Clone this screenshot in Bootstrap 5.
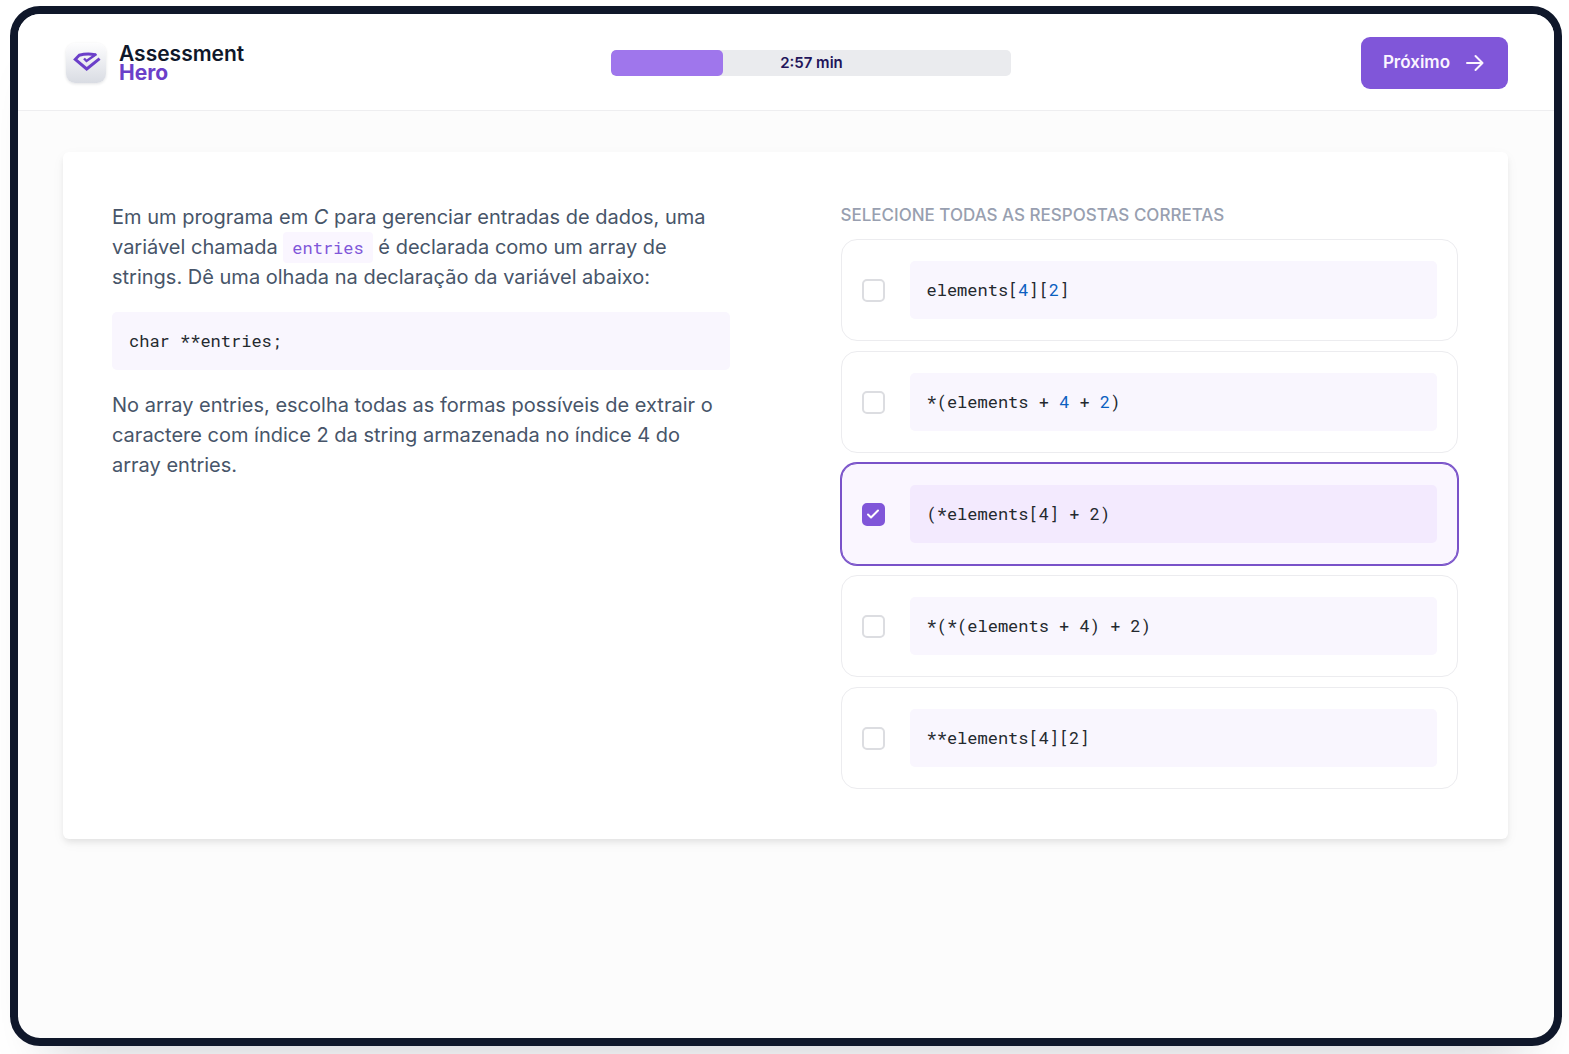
<!DOCTYPE html>
<html lang="pt-BR">
<head>
<meta charset="utf-8">
<meta name="viewport" content="width=device-width, initial-scale=1">
<title>Assessment Hero</title>
<link href="https://cdn.jsdelivr.net/npm/bootstrap@5.3.0/dist/css/bootstrap.min.css" rel="stylesheet">
<style>
  body { font-family: Inter, "Liberation Sans", sans-serif; color: #475569; background: #fff; }
  .page-wrap { min-height: 100vh; padding: 6px 7px 8px 10px; }
  .device { border: 8px solid #0f172a; border-radius: 30px; background: #fcfcfc; box-shadow: 0 40px 50px -40px rgba(15, 23, 42, .25); }
  .topbar { min-height: 97px; padding: 2px 46px 0 48px; background: #fff; border-bottom: 1px solid #eeeef0; border-radius: 22px 22px 0 0; }
  .brand { gap: 13px; width: 196px; color: #0f172a; font-size: 21px; font-weight: 600; line-height: 19px; }
  .brand-hero { color: #6b3fc9; font-weight: 700; }
  .brand-icon { width: 40px; height: 40px; border-radius: 9px; background: linear-gradient(#fdfdfe, #d9dce3); box-shadow: 0 1px 3px rgba(15, 23, 42, .12); }
  .brand-icon svg { display: block; }
  .timer { width: 400px; height: 26px; border-radius: 5px; background: #eaebee; color: #22155a; font-size: 15px; font-weight: 600; }
  .timer .progress-bar { border-radius: 5px; background: #9f76ec; }
  .next-btn { height: 52px; padding: 0 22px; gap: 14px; border: 0; border-radius: 9px; background: #8056d9; color: #fbf5ff; font-size: 17px; font-weight: 600; }
  .next-btn:hover { background: #6f46c6; color: #fff; }
  .main-area { padding: 41px 46px 41px 45px; }
  .question { padding: 50px 50px 50px 49px; column-gap: 111px; border: 0; border-radius: 6px; background: #fff; box-shadow: 0 4px 6px -1px rgba(0, 0, 0, .08), 0 4px 14px rgba(0, 0, 0, .04); }
  .prompt { font-size: 20px; line-height: 30px; }
  .prompt p { margin-bottom: 20px; }
  .code-inline { padding: 4px 9px; border-radius: 4px; background: #faf6ff; color: #8056d9; font-family: "Roboto Mono", "DejaVu Sans Mono", monospace; font-size: 17px; line-height: 20px; }
  .code-box { height: 58px; padding: 0 17px; border-radius: 5px; background: #f9f6fe; color: #24292e; font-family: "Roboto Mono", "DejaVu Sans Mono", monospace; font-size: 17px; line-height: 58px; }
  .prompt .code-box { margin-bottom: 20px; }
  .num { color: #0b5fc0; }
  .hint { margin-bottom: 11px; color: #989fb0; font-size: 17px; font-weight: 500; line-height: 26px; }
  .options { gap: 10px; }
  .option { padding: 21px 20px; gap: 25px; border: 1px solid #ececef; border-radius: 16px; background: #fff; cursor: pointer; }
  .option .form-check-input { width: 23px; height: 23px; border: 2px solid #dcdde1; border-radius: 5px; }
  .option .form-check-input:checked { border-color: #8056d9; background-color: #8056d9; background-size: 18px;
    background-image: url("data:image/svg+xml,%3csvg xmlns='http://www.w3.org/2000/svg' viewBox='0 0 18 18'%3e%3cpath d='M4 9.5l3 3 7-7' fill='none' stroke='%23fff' stroke-width='2' stroke-linecap='round' stroke-linejoin='round'/%3e%3c/svg%3e"); }
  .option:has(:checked) { border-color: #7952c9; background: #faf6ff; box-shadow: 0 0 0 1px #7952c9; }
  .option:has(:checked) .code-box { background: #f3eafe; }
</style>
<script src="https://cdn.jsdelivr.net/npm/bootstrap@5.3.0/dist/js/bootstrap.bundle.min.js"></script>
</head>
<body>
<div class="page-wrap d-flex">
  <div class="device flex-grow-1">
    <header class="topbar d-flex align-items-center justify-content-between">
      <a href="#" class="brand d-flex align-items-center text-decoration-none">
        <span class="brand-icon flex-shrink-0">
          <svg width="40" height="40" viewBox="0 0 40 40" aria-hidden="true">
            <path d="M29 11.700C24 10.700 18 10.900 13.200 12.300L9.300 16.300L20.700 26L33.600 15.600" fill="none" stroke="#6b3fc9" stroke-width="3"/>
            <path d="M18 15.500L20.500 18L30.500 11" fill="none" stroke="#6b3fc9" stroke-width="2.400"/>
          </svg>
        </span>
        <span>Assessment<br><span class="brand-hero">Hero</span></span>
      </a>
      <div class="timer progress position-relative" role="progressbar" aria-label="Tempo restante" aria-valuenow="28" aria-valuemin="0" aria-valuemax="100">
        <div class="progress-bar" style="width: 28%"></div>
        <span class="position-absolute top-0 start-0 w-100 h-100 d-flex align-items-center justify-content-center">2:57 min</span>
      </div>
      <button type="button" class="next-btn btn d-flex align-items-center">
        Próximo
        <svg width="22" height="22" viewBox="0 0 22 22" fill="none" stroke="currentColor" stroke-width="2" stroke-linecap="round" stroke-linejoin="round" aria-hidden="true"><path d="M3 11H18.500M11.500 4l7 7-7 7"/></svg>
      </button>
    </header>
    <main class="main-area">
      <div class="question card flex-column flex-lg-row">
        <section class="prompt col">
          <p>Em um programa em <em>C</em> para gerenciar entradas de dados, uma variável chamada <code class="code-inline">entries</code> é declarada como um array de strings. Dê uma olhada na declaração da variável abaixo:</p>
          <pre class="code-box">char **entries;</pre>
          <p class="mb-0">No array entries, escolha todas as formas possíveis de extrair o caractere com índice 2 da string armazenada no índice 4 do array entries.</p>
        </section>
        <section class="col">
          <h2 class="hint text-uppercase">Selecione todas as respostas corretas</h2>
          <div class="options d-flex flex-column">
            <label class="option d-flex align-items-center">
              <input class="form-check-input m-0 flex-shrink-0" type="checkbox">
              <code class="code-box flex-grow-1">elements[<span class="num">4</span>][<span class="num">2</span>]</code>
            </label>
            <label class="option d-flex align-items-center">
              <input class="form-check-input m-0 flex-shrink-0" type="checkbox">
              <code class="code-box flex-grow-1">*(elements + <span class="num">4</span> + <span class="num">2</span>)</code>
            </label>
            <label class="option d-flex align-items-center">
              <input class="form-check-input m-0 flex-shrink-0" type="checkbox" checked>
              <code class="code-box flex-grow-1">(*elements[4] + 2)</code>
            </label>
            <label class="option d-flex align-items-center">
              <input class="form-check-input m-0 flex-shrink-0" type="checkbox">
              <code class="code-box flex-grow-1">*(*(elements + 4) + 2)</code>
            </label>
            <label class="option d-flex align-items-center">
              <input class="form-check-input m-0 flex-shrink-0" type="checkbox">
              <code class="code-box flex-grow-1">**elements[4][2]</code>
            </label>
          </div>
        </section>
      </div>
    </main>
  </div>
</div>
</body>
</html>
